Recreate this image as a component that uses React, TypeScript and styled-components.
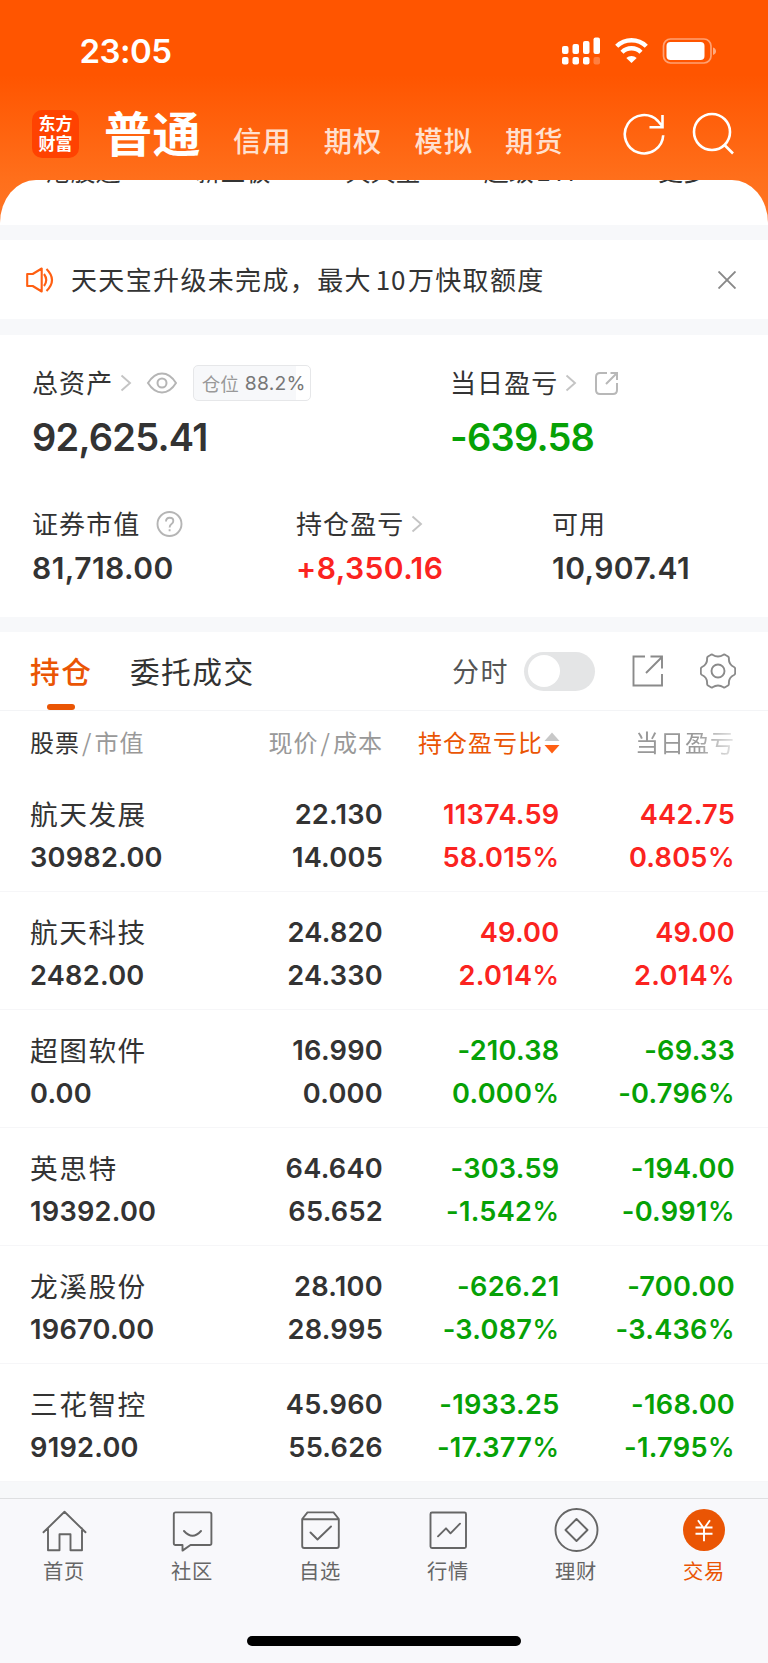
import React from "react";
import styled, { createGlobalStyle } from "styled-components";

const CJK = '"Noto Sans CJK SC", sans-serif';
const NUM = 'Inter, "Noto Sans CJK SC", sans-serif';
const INK = "#333333";
const ORANGE = "#ea5504";
const RED = "#fb2320";
const GREEN = "#06a106";

const Global = createGlobalStyle`
  * { box-sizing: border-box; }
  body { margin: 0; background: #fff; font-family: ${CJK}; color: ${INK}; }
  svg { display: block; flex: none; }
`;

const Screen = styled.main`
  width: 768px;
  height: 1663px;
  display: flex;
  flex-direction: column;
  overflow: hidden;
`;

const Top = styled.div`
  height: 225px;
  flex: none;
  background: linear-gradient(#ff5500 0, #ff5500 75px, #ff6f1b 179px, #ff7626 225px);
`;

const StatusBar = styled.div`
  height: 102px;
  padding: 0 52px 0 79.5px;
  display: flex;
  align-items: center;
  justify-content: space-between;
`;

const Clock = styled.time`
  font: 600 33px/40px ${NUM};
  color: #fff;
  letter-spacing: -0.5px;
`;

const StatusIcons = styled.div`
  display: flex;
  align-items: center;
`;

const NavBar = styled.nav`
  height: 77.5px;
  padding: 0 34px 0 32px;
  display: flex;
  align-items: flex-start;
`;

const Logo = styled.div`
  width: 47px;
  height: 48px;
  margin-top: 8px;
  border-radius: 10px;
  background: #ff4201;
  color: #fff;
  font: 700 17px/20px ${CJK};
  text-align: center;
  padding-top: 3px;
`;

const MainAccount = styled.h1`
  margin: 3px 0 0 25px;
  width: 129px;
  font: 700 48px/52px ${CJK};
  letter-spacing: 0.6px;
  color: #fff;
`;

const Account = styled.span`
  width: 90.7px;
  margin-top: 18px;
  font: 500 28.3px/40px ${CJK};
  letter-spacing: 1px;
  color: #ffe0d0;
`;

const NavIcons = styled.div`
  display: flex;
  gap: 27px;
  margin: 10px 0 0 auto;
`;

const Sheet = styled.div`
  height: 45.5px;
  overflow: hidden;
  background: #fff;
  border-radius: 36px 36px 0 0 / 43px 43px 0 0;
`;

const Shortcuts = styled.div`
  display: grid;
  grid-template-columns: repeat(5, 150px);
  padding-left: 8px;
  margin-top: -21.5px;
  text-align: center;
  font: 400 25px/24px ${CJK};
`;

const Latin = styled.span`
  margin-left: 2px;
  letter-spacing: 1px;
`;

const Gap = styled.div`
  height: ${(p: { $h: number }) => p.$h}px;
  flex: none;
  background: #f7f8fa;
`;

const Notice = styled.div`
  height: 79px;
  flex: none;
  display: flex;
  align-items: center;
  padding: 0 32px 0 26px;
`;

const NoticeText = styled.span`
  flex: 1;
  margin: -2px 0 0 17px;
  font: 400 26px/40px ${CJK};
  letter-spacing: 1.35px;
`;

const NoticeNumber = styled.span`
  margin: 0 2px 0 4px;
  letter-spacing: 0.6px;
`;

const Summary = styled.section`
  height: 282px;
  flex: none;
  padding: 27px 32px 0;
`;

const SummaryRow = styled.div<{ $cols: string; $top?: number }>`
  display: grid;
  grid-template-columns: ${(p) => p.$cols};
  margin-top: ${(p) => p.$top ?? 0}px;
`;

const Label = styled.div`
  height: 40px;
  display: flex;
  align-items: center;
  font: 400 26px/40px ${CJK};
  letter-spacing: 1.1px;

  svg { margin-top: 2px; }
`;

const Amount = styled.div<{ $big?: boolean; $color?: string }>`
  margin-top: ${(p) => (p.$big ? 10 : 5)}px;
  font: 600 ${(p) => (p.$big ? "38px/50px" : "30px/40px")} ${NUM};
  letter-spacing: ${(p) => (p.$big ? -0.75 : 0.45)}px;
  color: ${(p) => p.$color ?? INK};
`;

const Chip = styled.div`
  width: 118px;
  height: 36px;
  margin: 1px 0 -1px 16px;
  padding-left: 8px;
  border: 1px solid #e6e7e9;
  border-radius: 5px;
  background: linear-gradient(90deg, #f7f8fa 88.2%, #fff 88.2%);
  display: flex;
  align-items: center;
  gap: 6px;
  font: 400 18.5px/34px ${CJK};
  letter-spacing: 0;
  color: #999;
`;

const ChipValue = styled.b`
  font: 400 19.3px/34px ${NUM};
  letter-spacing: 0.25px;
  color: #777;
`;

const Tabs = styled.div`
  height: 79px;
  flex: none;
  padding: 0 32px 0 30px;
  display: flex;
  align-items: stretch;
  border-bottom: 1px solid #f3f4f6;
`;

const Tab = styled.div<{ $active?: boolean }>`
  margin-right: 37.5px;
  display: flex;
  flex-direction: column;
  align-items: center;
  justify-content: space-between;
  padding-top: 18.5px;
  font: ${(p) => (p.$active ? 500 : 400)} 29.7px/40px ${CJK};
  letter-spacing: 1.5px;
  color: ${(p) => (p.$active ? ORANGE : INK)};
`;

const Indicator = styled.span`
  width: 28px;
  height: 6px;
  border-radius: 3px;
  background: ${ORANGE};
`;

const Tools = styled.div`
  margin-left: auto;
  display: flex;
  align-items: center;
  font: 400 27px/40px ${CJK};
  letter-spacing: 1.5px;
  color: #555;
`;

const Toggle = styled.span`
  width: 71px;
  height: 39px;
  margin: 0 37px 0 15px;
  padding: 3.5px;
  border-radius: 20px;
  background: #e4e5e6;
`;

const Knob = styled.span`
  display: block;
  width: 32px;
  height: 32px;
  border-radius: 50%;
  background: #fff;
`;

const COLS = "161px 192px 176.5px 175.5px";

const HeadRow = styled.div`
  height: 63px;
  flex: none;
  padding: 0 30px 2px;
  display: grid;
  grid-template-columns: ${COLS};
  align-items: center;
  font: 400 24px/40px ${CJK};
  letter-spacing: 1px;
  color: #999;
`;

const Head = styled.div<{ $fade?: boolean; $active?: boolean }>`
  display: flex;
  align-items: center;
  justify-content: ${(p) => (p.$fade || p.$active ? "flex-end" : "flex-start")};
  color: ${(p) => (p.$active ? ORANGE : "inherit")};
  ${(p) => p.$fade && "mask-image: linear-gradient(90deg, #000 78%, rgba(0,0,0,.25) 100%);"}

  svg { margin: 2px -0.5px 0 1px; }
`;

const HeadRight = styled.div`
  text-align: right;
`;

const Strong = styled.span`
  color: ${INK};
`;

const Slash = styled.span`
  margin: 0 2px;
`;

const Row = styled.div`
  height: 118px;
  flex: none;
  padding: 18px 30px 0;
  display: grid;
  grid-template-columns: ${COLS};
  grid-template-rows: 43px 43px;
  border-bottom: 1px solid #f6f6f8;
`;

const Name = styled.div`
  margin-top: -0.5px;
  font: 400 27.7px/43px ${CJK};
  letter-spacing: 1.5px;
  white-space: nowrap;
`;

const Num = styled.div<{ $color?: string; $left?: boolean }>`
  padding-top: 1px;
  font: 600 27.2px/43px ${NUM};
  letter-spacing: 0.25px;
  color: ${(p) => p.$color ?? INK};
  text-align: ${(p) => (p.$left ? "left" : "right")};
`;

const Percent = styled.span`
  font-weight: 500;
`;

const TabBar = styled.footer`
  flex: 1;
  border-top: 1px solid #dedfe1;
  background: #f8f8fb;
  display: flex;
  flex-direction: column;
  align-items: center;
`;

const TabItems = styled.div`
  width: 100%;
  height: 137px;
  display: grid;
  grid-template-columns: repeat(6, 128px);
`;

const TabItem = styled.div<{ $active?: boolean }>`
  display: flex;
  flex-direction: column;
  align-items: center;
  padding-top: 8px;
  gap: 2px;
  font: 400 20.3px/30px ${CJK};
  letter-spacing: 0.8px;
  color: ${(p) => (p.$active ? ORANGE : "#666")};
`;

const HomeBar = styled.div`
  width: 274px;
  height: 10px;
  border-radius: 5px;
  background: #000;
`;

const Chevron = ({ ml }: { ml: number }) => (
  <svg width={11 + ml} height="18" viewBox={`${-ml} 0 ${11 + ml} 18`} fill="none" stroke="#c4c4c4" strokeWidth="1.9">
    <path d="M1 1.5l8.5 7.5L1 16.5" />
  </svg>
);

const holdings = [
  ["航天发展", "22.130", "11374.59", "442.75", "30982.00", "14.005", "58.015", "0.805"],
  ["航天科技", "24.820", "49.00", "49.00", "2482.00", "24.330", "2.014", "2.014"],
  ["超图软件", "16.990", "-210.38", "-69.33", "0.00", "0.000", "0.000", "-0.796"],
  ["英思特", "64.640", "-303.59", "-194.00", "19392.00", "65.652", "-1.542", "-0.991"],
  ["龙溪股份", "28.100", "-626.21", "-700.00", "19670.00", "28.995", "-3.087", "-3.436"],
  ["三花智控", "45.960", "-1933.25", "-168.00", "9192.00", "55.626", "-17.377", "-1.795"],
];

const line = { fill: "none", stroke: "#666", strokeWidth: 1.9, strokeLinejoin: "round" as const, strokeLinecap: "round" as const };

const navItems = [
  { label: "首页", icon: <g {...line}><path d="M1.5 25.3L22.5 4.800l21 20.500M6 21.500V43.200h11.500V27.300h11V43.200H40V21.500" /></g> },
  { label: "社区", icon: <g {...line}><path d="M5.600 5.400h34q1.800 0 1.800 1.800v29q0 1.800-1.800 1.800H20.500l-8 5.600V38H5.600q-1.800 0-1.800-1.800v-29q0-1.800 1.800-1.800zM14 24q8.500 9.500 17 0" /></g> },
  { label: "自选", icon: <g {...line}><path d="M4.200 12L9.500 5.400H35.500L40.800 12V39q0 2-2 2H6.200q-2 0-2-2zM4.200 12.300H40.800M12.500 25.500l7 7L33 19.500" /></g> },
  { label: "行情", icon: <g {...line}><rect x="4.500" y="5.500" width="35.500" height="35.500" rx="1.500" /><path d="M12 29.300l8-8 4.500 5 9.500-9.600" /></g> },
  { label: "理财", icon: <g {...line}><circle cx="22.500" cy="23" r="21" /><path d="M22.500 12l11 11-11 11-11-11z" /></g> },
  { label: "交易", active: true, icon: <><circle cx="22" cy="23" r="21" fill={ORANGE} /><path d="M16 13.200l6 8.500 6-8.500M22 21.700v12.500M13.500 20.500h17M13.500 26.700h17" fill="none" stroke="#fff" strokeWidth="1.900" /></> },
];

export default function App() {
  return (
    <Screen>
      <Global />
      <Top>
        <StatusBar>
          <Clock>23:05</Clock>
          <StatusIcons>
            <svg width="154" height="30" viewBox="0 0 154 30" fill="#fff">
              <rect x="0" y="10" width="6.500" height="8" rx="2" />
              <rect x="10.500" y="8" width="6.500" height="10" rx="2" />
              <rect x="21" y="5" width="6.500" height="13" rx="2" />
              <rect x="31.500" y="1.500" width="6.500" height="16.500" rx="2" />
              <rect x="0" y="21" width="6.500" height="7.500" rx="2" />
              <rect x="10.500" y="21" width="6.500" height="7.500" rx="2" />
              <rect x="21" y="21" width="6.500" height="7.500" rx="2" />
              <rect x="31.500" y="21" width="6.500" height="7.500" rx="2" opacity=".25" />
              <g fill="none" stroke="#fff" strokeWidth="4.400">
                <path d="M54.700 10.300a21 21 0 0 1 29.600 0" />
                <path d="M60 16.200a13.500 13.500 0 0 1 19 0" />
              </g>
              <path d="M69.500 27l-5.200-5a7.500 7.500 0 0 1 10.400 0z" />
              <rect x="101.500" y="3" width="47.500" height="24" rx="7" fill="none" stroke="#fff" strokeWidth="1.700" opacity=".45" />
              <rect x="104.500" y="6" width="38" height="18" rx="4" />
              <path d="M151 11.500q3 1 3 3.700t-3 3.700z" opacity=".5" />
            </svg>
          </StatusIcons>
        </StatusBar>
        <NavBar>
          <Logo>东方<br />财富</Logo>
          <MainAccount>普通</MainAccount>
          <Account>信用</Account>
          <Account>期权</Account>
          <Account>模拟</Account>
          <Account>期货</Account>
          <NavIcons>
            <svg width="42" height="44" viewBox="0 0 42 44" fill="none" stroke="#fff" strokeWidth="2.600">
              <path d="M40.200 23.300a19.200 19.200 0 1 1-5.300-14.300l4.200 5M39.500 3v12.300H26.500" />
            </svg>
            <svg width="42" height="44" viewBox="0 0 42 44" fill="none" stroke="#fff" strokeWidth="2.600">
              <circle cx="20" cy="20" r="18" />
              <path d="M32 32.500l9 9" />
            </svg>
          </NavIcons>
        </NavBar>
        <Sheet>
          <Shortcuts>
            <span>港股通</span>
            <span>新三板</span>
            <span>天天宝</span>
            <span>超级<Latin>ETF</Latin></span>
            <span>更多</span>
          </Shortcuts>
        </Sheet>
      </Top>
      <Gap $h={15} />
      <Notice>
        <svg width="28" height="26" viewBox="0 0 28 26" fill="none" stroke="#ff5f12" strokeWidth="2.100" strokeLinejoin="round">
          <path d="M1.200 7h5.500L15.700 1.500v23L6.700 19H1.200zM18 7q4.500 6 0 12M20.500 2q11 11 0 22" />
        </svg>
        <NoticeText>天天宝升级未完成，最大<NoticeNumber>10</NoticeNumber>万快取额度</NoticeText>
        <svg width="18" height="18" viewBox="0 0 18 18" stroke="#888" strokeWidth="1.900">
          <path d="M.5.5l17 17M17.500.5l-17 17" />
        </svg>
      </Notice>
      <Gap $h={16} />
      <Summary>
        <SummaryRow $cols="418px 1fr">
          <div>
            <Label>
              总资产
              <Chevron ml={7.500} />
              <svg width="45" height="22" viewBox="-15 0 45 22" fill="none" stroke="#b5b5b5" strokeWidth="2">
                <path d="M1 11Q7 1.500 15 1.500T29 11Q23 20.500 15 20.500T1 11z" />
                <circle cx="15" cy="11" r="4.500" />
              </svg>
              <Chip>仓位<ChipValue>88.2%</ChipValue></Chip>
            </Label>
            <Amount $big>92,625.41</Amount>
          </div>
          <div>
            <Label>
              当日盈亏
              <Chevron ml={7.500} />
              <svg width="41" height="24" viewBox="-18 0 41 24" fill="none" stroke="#b8b8b8" strokeWidth="2">
                <path d="M12 2H5Q1 2 1 6v13q0 4 4 4h13q4 0 4-4v-7M11 13L22 2M15.500 2H22v7" />
              </svg>
            </Label>
            <Amount $big $color={GREEN}>-639.58</Amount>
          </div>
        </SummaryRow>
        <SummaryRow $cols="264px 256px 1fr" $top={41}>
          <div>
            <Label>
              证券市值
              <svg width="43" height="26" viewBox="-16.500 0 43 26" fill="none" stroke="#b5b5b5" strokeWidth="1.900">
                <circle cx="13" cy="13" r="12" />
                <path d="M9.500 10.500q0-3.800 3.700-3.800t3.600 3.300q0 1.800-1.800 3T13.100 16.500M13.100 18.200v2" />
              </svg>
            </Label>
            <Amount>81,718.00</Amount>
          </div>
          <div>
            <Label>持仓盈亏<Chevron ml={7.500} /></Label>
            <Amount $color={RED}>+8,350.16</Amount>
          </div>
          <div>
            <Label>可用</Label>
            <Amount>10,907.41</Amount>
          </div>
        </SummaryRow>
      </Summary>
      <Gap $h={15} />
      <Tabs>
        <Tab $active>持仓<Indicator /></Tab>
        <Tab>委托成交</Tab>
        <Tools>
          分时
          <Toggle><Knob /></Toggle>
          <svg width="68" height="36" viewBox="0 0 68 36" fill="none" stroke="#8a8a8a" strokeWidth="1.900">
            <path d="M13 3.500H1.500V32.500H30V21M14 20L30 4M18.500 3.500H30V15.500" />
          </svg>
          <svg width="36" height="36" viewBox="0 0 36 36" fill="none" stroke="#8a8a8a" strokeWidth="1.900" strokeLinejoin="round">
            <path d="M12.500 1.700Q18 5.200 23.500 1.700Q24.500 1.300 25.500 2L28 3.500Q29 4.200 28.900 5.500Q28.500 11.500 34 14Q35.200 14.600 35.200 16V20Q35.200 21.400 34 22Q28.500 24.500 28.900 30.500Q29 31.800 28 32.500L25.500 34Q24.500 34.700 23.500 34.300Q18 30.800 12.500 34.300Q11.500 34.700 10.500 34L8 32.500Q7 31.800 7.100 30.500Q7.500 24.500 2 22Q.8 21.400 .8 20V16Q.8 14.600 2 14Q7.500 11.500 7.100 5.500Q7 4.200 8 3.500L10.500 2Q11.500 1.300 12.500 1.700z" />
            <circle cx="18" cy="18" r="6.500" />
          </svg>
        </Tools>
      </Tabs>
      <HeadRow>
        <Head><Strong>股票</Strong><Slash>/</Slash>市值</Head>
        <HeadRight>现价<Slash>/</Slash>成本</HeadRight>
        <Head $active>
          持仓盈亏比
          <svg width="16" height="22" viewBox="0 0 16 22">
            <path d="M8 .5l7.500 8.500H.5z" fill="#c8c8c8" />
            <path d="M8 21.500L.5 13h15z" fill="#ff5f12" />
          </svg>
        </Head>
        <Head $fade>当日盈亏</Head>
      </HeadRow>
      {holdings.map((h) => {
        const tone = h[2].startsWith("-") ? GREEN : RED;
        return (
          <Row key={h[0]}>
            <Name>{h[0]}</Name>
            <Num>{h[1]}</Num>
            <Num $color={tone}>{h[2]}</Num>
            <Num $color={tone}>{h[3]}</Num>
            <Num $left>{h[4]}</Num>
            <Num>{h[5]}</Num>
            <Num $color={tone}>{h[6]}<Percent>%</Percent></Num>
            <Num $color={tone}>{h[7]}<Percent>%</Percent></Num>
          </Row>
        );
      })}
      <Gap $h={16} />
      <TabBar>
        <TabItems>
          {navItems.map((n) => (
            <TabItem key={n.label} $active={n.active}>
              <svg width="45" height="46" viewBox="0 0 45 46">{n.icon}</svg>
              {n.label}
            </TabItem>
          ))}
        </TabItems>
        <HomeBar />
      </TabBar>
    </Screen>
  );
}
